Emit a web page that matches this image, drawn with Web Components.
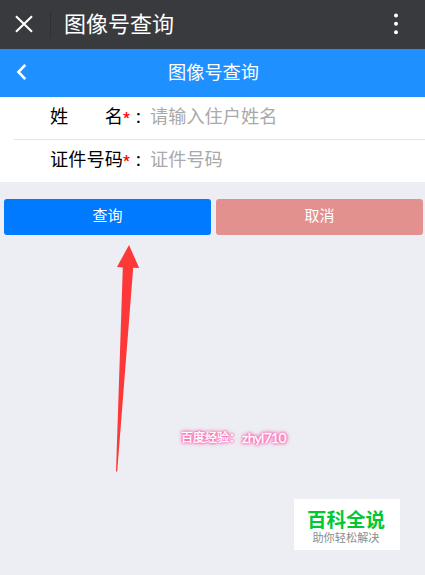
<!DOCTYPE html>
<html lang="zh-CN">
<head>
  <meta charset="UTF-8">
  <meta name="viewport" content="width=device-width, initial-scale=1.0">
  <title>图像号查询</title>
  <style>
    body {
      margin: 0;
      height: 575px;
      overflow: hidden;
      background: #edeef3;
      font-family: Roboto, "Noto Sans CJK SC", sans-serif;
    }
    .actions {
      display: flex;
      gap: 5px;
      padding: 17px 2px 0 4px;
    }
  </style>
</head>
<body>

<app-bar>图像号查询</app-bar>
<page-header>图像号查询</page-header>
<form-list>
  <form-row placeholder="请输入住户姓名"><span>姓</span><span>名</span></form-row>
  <form-row placeholder="证件号码"><span>证</span><span>件</span><span>号</span><span>码</span></form-row>
</form-list>
<div class="actions">
  <action-button>查询</action-button>
  <action-button kind="cancel">取消</action-button>
</div>
<pointer-arrow></pointer-arrow>
<author-mark><span slot="site">百度经验：</span>zhyl710</author-mark>
<site-badge name="百科全说">助你轻松解决</site-badge>

<script>
  class BaseElement extends HTMLElement {
    constructor() {
      super();
      const shadow = this.attachShadow({ mode: 'open' });
      const template = document.createElement('template');
      template.innerHTML = this.constructor.markup;
      shadow.appendChild(template.content.cloneNode(true));
    }
  }

  class AppBar extends BaseElement {
    static markup = `
      <style>
        :host {
          display: flex;
          align-items: center;
          box-sizing: border-box;
          height: 49px;
          padding: 0 25px 0 15px;
          background: #393a3e;
          color: #fff;
          font-size: 22px;
          line-height: 48px;
        }
        .close { width: 18px; height: 18px; margin-top: -1px; }
        .line { width: 1px; height: 26px; margin: 0 13px 0 17px; background: #2e2f33; }
        .title { flex: 1; }
        .more { width: 6px; height: 22px; margin: -1px 1px 0 0; }
      </style>
      <svg class="close" viewBox="0 0 18 18" fill="none" stroke="#fff" stroke-width="2.1">
        <path d="M1 1.2 17 16.8M17 1.2 1 16.8"/>
      </svg>
      <span class="line"></span>
      <span class="title"><slot></slot></span>
      <svg class="more" viewBox="0 0 6 22" fill="#fff">
        <circle cx="3" cy="2.5" r="2"/><circle cx="3" cy="10.8" r="2"/><circle cx="3" cy="19.2" r="2"/>
      </svg>
    `;
  }
  customElements.define('app-bar', AppBar);

  class PageHeader extends BaseElement {
    static markup = `
      <style>
        :host {
          display: grid;
          grid-template-columns: 44px 1fr 44px;
          align-items: center;
          height: 48px;
          background: #1e90ff;
          color: #fff;
          font-size: 18.2px;
          line-height: 46px;
          text-align: center;
        }
        svg { width: 12px; height: 18px; margin-left: 16px; margin-top: -2px; }
        .title { margin-left: 2px; }
      </style>
      <svg viewBox="0 0 12 18" fill="none" stroke="#fff" stroke-width="2.6">
        <path d="M9.3 1.8 2.4 9 9.3 16.2"/>
      </svg>
      <span class="title"><slot></slot></span>
    `;
  }
  customElements.define('page-header', PageHeader);

  class FormList extends BaseElement {
    static markup = `
      <style>
        :host { display: block; background: #fff; }
        ::slotted(form-row:not(:last-child)) { border-bottom: 1px solid #e6e6e8; }
      </style>
      <slot></slot>
    `;
  }
  customElements.define('form-list', FormList);

  class FormRow extends BaseElement {
    static markup = `
      <style>
        :host {
          display: flex;
          height: 42px;
          margin-left: 14px;
          padding-left: 36px;
          font-size: 18.2px;
          line-height: 40px;
          color: #000;
        }
        .label { display: flex; justify-content: space-between; width: 73px; }
        .star { width: 8px; color: #f00; font-size: 15px; font-weight: 700; line-height: 42px; }
        .colon { width: 19px; padding-left: 5px; box-sizing: border-box; font-weight: 500; }
        .hint { color: #a9a9a9; }
      </style>
      <span class="label"><slot></slot></span>
      <span class="star">*</span>
      <span class="colon">:</span>
      <span class="hint"></span>
    `;
    connectedCallback() {
      this.shadowRoot.querySelector('.hint').textContent = this.getAttribute('placeholder') || '';
    }
  }
  customElements.define('form-row', FormRow);

  class ActionButton extends BaseElement {
    static markup = `
      <style>
        :host { display: block; flex: 1; }
        button {
          display: block;
          width: 100%;
          height: 36px;
          padding: 0 0 2px;
          border: 0;
          border-radius: 3px;
          background: #007aff;
          color: #fff;
          font: inherit;
          font-size: 15px;
          line-height: 34px;
        }
        :host([kind="cancel"]) button { background: #e3918f; }
      </style>
      <button type="button"><slot></slot></button>
    `;
  }
  customElements.define('action-button', ActionButton);

  // Red arrow lying over the page, pointing at the query button
  class PointerArrow extends BaseElement {
    static markup = `
      <style>
        :host { position: absolute; left: 110px; top: 240px; width: 36px; height: 236px; }
        svg { display: block; }
      </style>
      <svg width="36" height="236" viewBox="0 0 36 236" fill="#fd3838">
        <path d="M19 5 29.2 28 23.2 27.8 7.2 231.5 6 231.5 12.8 27.6 7 27Z"/>
      </svg>
    `;
  }
  customElements.define('pointer-arrow', PointerArrow);

  class AuthorMark extends BaseElement {
    static markup = `
      <style>
        :host {
          position: absolute;
          left: 181px;
          top: 429px;
          display: flex;
          height: 18px;
          line-height: 18px;
          color: #fff;
          font-size: 14px;
          white-space: nowrap;
          -webkit-text-stroke: 0.4px #fff;
          text-shadow: 0 0 1px #ff4fa3, 0 0 2px #ff5cab, 0 0 2px #ff5cab, 0 0 3px #ff5cab,
            0 0 4px #ff6fb5, 0 0 5px #ff8cc5;
        }
        .site { width: 61px; font-size: 12px; }
        .name { font-family: Lato, sans-serif; letter-spacing: -0.7px; }
      </style>
      <span class="site"><slot name="site"></slot></span>
      <span class="name"><slot></slot></span>
    `;
  }
  customElements.define('author-mark', AuthorMark);

  class SiteBadge extends BaseElement {
    static markup = `
      <style>
        :host {
          position: absolute;
          left: 294px;
          top: 499px;
          display: flex;
          flex-direction: column;
          align-items: center;
          box-sizing: border-box;
          width: 106px;
          height: 51px;
          padding: 10px 2px 0 0;
          background: #fff;
        }
        .name { color: #00c832; font-size: 19.5px; font-weight: 700; line-height: 24px; }
        .text { color: #8c8c8c; font-size: 11.2px; line-height: 12px; }
      </style>
      <span class="name"></span>
      <span class="text"><slot></slot></span>
    `;
    connectedCallback() {
      this.shadowRoot.querySelector('.name').textContent = this.getAttribute('name') || '';
    }
  }
  customElements.define('site-badge', SiteBadge);
</script>

</body>
</html>
